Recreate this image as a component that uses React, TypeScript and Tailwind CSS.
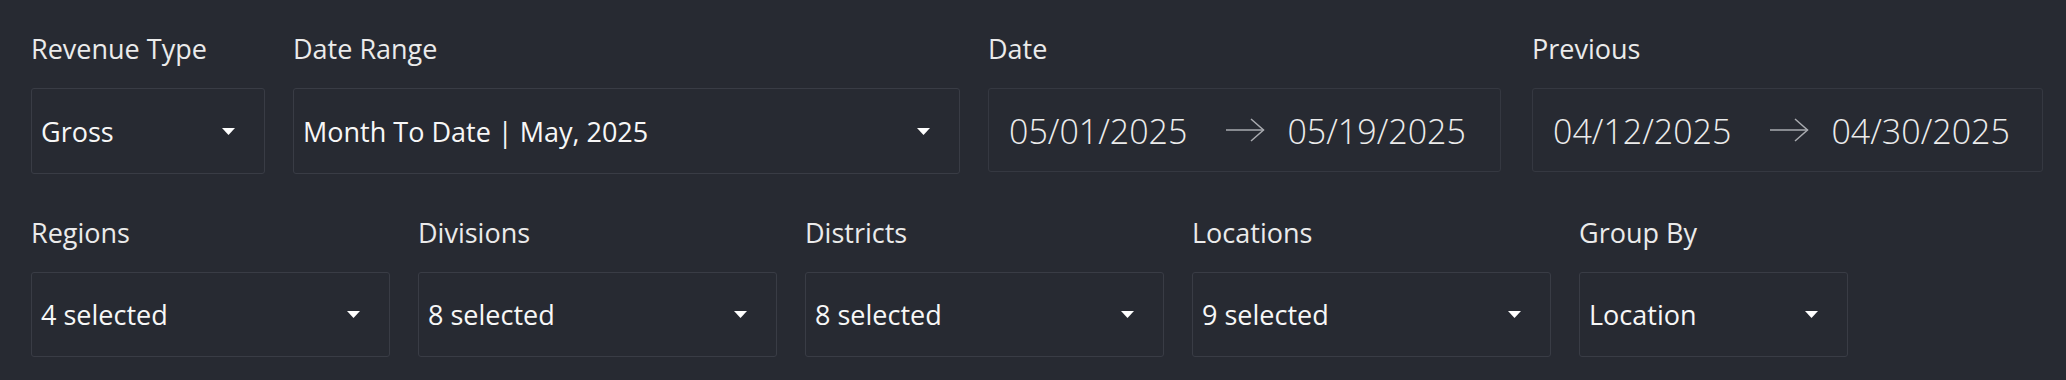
import React from "react";

const font = { fontFamily: '"Open Sans", "Noto Sans", sans-serif' };

function Caret() {
  return (
    <svg width="13" height="7" viewBox="0 0 13 7" className="shrink-0">
      <path d="M0 0 L13 0 L6.5 7 Z" fill="#ffffff" />
    </svg>
  );
}

function Arrow() {
  return (
    <svg width="40" height="24" viewBox="0 0 40 24" className="shrink-0">
      <path d="M1 12 H38.5" stroke="#a9abb0" strokeWidth="1.5" fill="none" />
      <path d="M26 1 L38.5 12 L26 23" stroke="#a9abb0" strokeWidth="1.5" fill="none" />
    </svg>
  );
}

function Select({ label, value, w, h }: { label: string; value: string; w: string; h: string }) {
  return (
    <div className={`flex flex-col gap-[19px] ${w}`}>
      <div className="h-[40px] leading-[39px] text-[27px] text-[#ebebeb]">{label}</div>
      <div
        className={`${h} flex items-center justify-between border border-[#393c45] rounded-[3px] pl-[9px] pr-[29px]`}
      >
        <span className="text-[27px] text-[#f7f7f7] pt-[2px]">{value}</span>
        <Caret />
      </div>
    </div>
  );
}

function DateField({ label, from, to, w, extra }: { label: string; from: string; to: string; w: string; extra?: string }) {
  return (
    <div className={`flex flex-col gap-[19px] ${w} ${extra ?? ""}`}>
      <div className="h-[40px] leading-[39px] text-[27px] text-[#ebebeb]">{label}</div>
      <div className="h-[84px] flex items-center border border-[#353841] rounded-[3px] pl-[20px]">
        <span className="text-[34px] font-light text-[#ececec] pt-[2px]">{from}</span>
        <span className="ml-[38px] mr-[22px] flex items-center">
          <Arrow />
        </span>
        <span className="text-[34px] font-light text-[#ececec] pt-[2px]">{to}</span>
      </div>
    </div>
  );
}

export default function App() {
  return (
    <div className="w-full h-[380px] bg-[#272a32] pt-[29px] pl-[31px]" style={font}>
      <div className="flex gap-[28px] items-start">
        <Select label="Revenue Type" value="Gross" w="w-[234px]" h="h-[86px]" />
        <Select label="Date Range" value="Month To Date | May, 2025" w="w-[667px]" h="h-[86px]" />
        <DateField label="Date" from="05/01/2025" to="05/19/2025" w="w-[513px]" />
        <DateField label="Previous" from="04/12/2025" to="04/30/2025" w="w-[511px]" extra="ml-[3px]" />
      </div>
      <div className="flex gap-[28px] items-start mt-[39px]">
        <Select label="Regions" value="4 selected" w="w-[359px]" h="h-[85px]" />
        <Select label="Divisions" value="8 selected" w="w-[359px]" h="h-[85px]" />
        <Select label="Districts" value="8 selected" w="w-[359px]" h="h-[85px]" />
        <Select label="Locations" value="9 selected" w="w-[359px]" h="h-[85px]" />
        <Select label="Group By" value="Location" w="w-[269px]" h="h-[85px]" />
      </div>
    </div>
  );
}
